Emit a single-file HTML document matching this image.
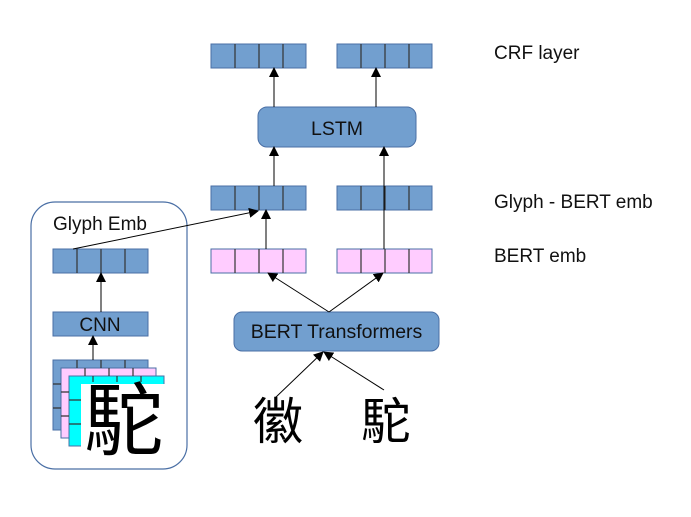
<!DOCTYPE html>
<html><head><meta charset="utf-8"><style>
html,body{margin:0;padding:0;background:#fff;}
svg{display:block}
text{font-family:"Liberation Sans","Noto Sans CJK TC",sans-serif;}
</style></head><body>
<svg width="691" height="517" viewBox="0 0 691 517" xmlns="http://www.w3.org/2000/svg">
<defs>
<marker id="ah" markerWidth="10" markerHeight="10" refX="9" refY="5" orient="auto" markerUnits="userSpaceOnUse">
<path d="M0,0 L10,5 L0,10 z" fill="#000"/>
</marker>
</defs>
<g stroke="#4a6fa5" stroke-width="1">
<rect x="211" y="44" width="95" height="24" fill="#729fcf"/>
<rect x="337" y="44" width="95" height="24" fill="#729fcf"/>
<rect x="211" y="186" width="95" height="24" fill="#729fcf"/>
<rect x="337" y="186" width="95" height="24" fill="#729fcf"/>
<rect x="211" y="249" width="95" height="24" fill="#ffccff"/>
<rect x="337" y="249" width="95" height="24" fill="#ffccff"/>
<rect x="53" y="249" width="95" height="24" fill="#729fcf"/>
<rect x="258" y="107" width="158" height="40" rx="9" fill="#729fcf"/>
<rect x="234" y="312" width="205" height="39" rx="8" fill="#729fcf"/>
<rect x="53" y="312" width="95" height="24" fill="#729fcf"/>
<rect x="53" y="360" width="95" height="70" fill="#729fcf"/>
<rect x="61" y="368" width="95" height="70" fill="#ffccff"/>
<rect x="69" y="376" width="95" height="70" fill="#00ffff"/>
</g>
<g stroke="#333" stroke-width="1.2">
<path d="M235 44v24M259 44v24M283 44v24M361 44v24M385 44v24M409 44v24"/>
<path d="M235 186v24M259 186v24M283 186v24M361 186v24M385 186v24M409 186v24"/>
<path d="M235 249v24M259 249v24M283 249v24M361 249v24M385 249v24M409 249v24"/>
<path d="M77 249v24M101 249v24M125 249v24"/>
<path d="M53 384h8M53 408h8M61 392h8M61 416h8M77 360v8M101 360v8M125 360v8M85 368v8M109 368v8M133 368v8"/>
<path d="M69 400h12M69 424h12M93 376v6M117 376v6M141 376v6"/>
</g>
<rect x="81" y="384" width="85" height="64" fill="#fff"/>
<text x="124" y="449" font-size="80" text-anchor="middle" style="font-family:'Noto Sans CJK TC',sans-serif">駝</text>
<rect x="31" y="202" width="156" height="267" rx="24" fill="none" stroke="#4a6fa5" stroke-width="1.2"/>
<g stroke="#000" stroke-width="1" fill="none" marker-end="url(#ah)">
<path d="M274 107V68"/>
<path d="M376 107V68"/>
<path d="M274 186V147"/>
<path d="M384 249V147"/>
<path d="M266 249V210"/>
<path d="M101 312V273"/>
<path d="M93 360V336"/>
<path d="M73 249L258 211"/>
<path d="M329 312L268 273"/>
<path d="M329 312L383 273"/>
<path d="M275 398L323 352"/>
<path d="M384 390L324 352"/>
</g>
<text x="337" y="135" font-size="19.5" text-anchor="middle" fill="#111">LSTM</text>
<text x="336.5" y="338" font-size="19.5" text-anchor="middle" fill="#111">BERT Transformers</text>
<text x="100" y="331" font-size="19" text-anchor="middle" fill="#111">CNN</text>
<text x="53" y="230" font-size="19" fill="#111">Glyph Emb</text>
<text x="494" y="59" font-size="19" fill="#111">CRF layer</text>
<text x="494" y="208" font-size="19" fill="#111">Glyph - BERT emb</text>
<text x="494" y="262" font-size="19" fill="#111">BERT emb</text>
<text x="278" y="439" font-size="50" text-anchor="middle" style="font-family:'Noto Sans CJK TC',sans-serif">徽</text>
<text x="386" y="439" font-size="50" text-anchor="middle" style="font-family:'Noto Sans CJK TC',sans-serif">駝</text>
</svg>
</body></html>
